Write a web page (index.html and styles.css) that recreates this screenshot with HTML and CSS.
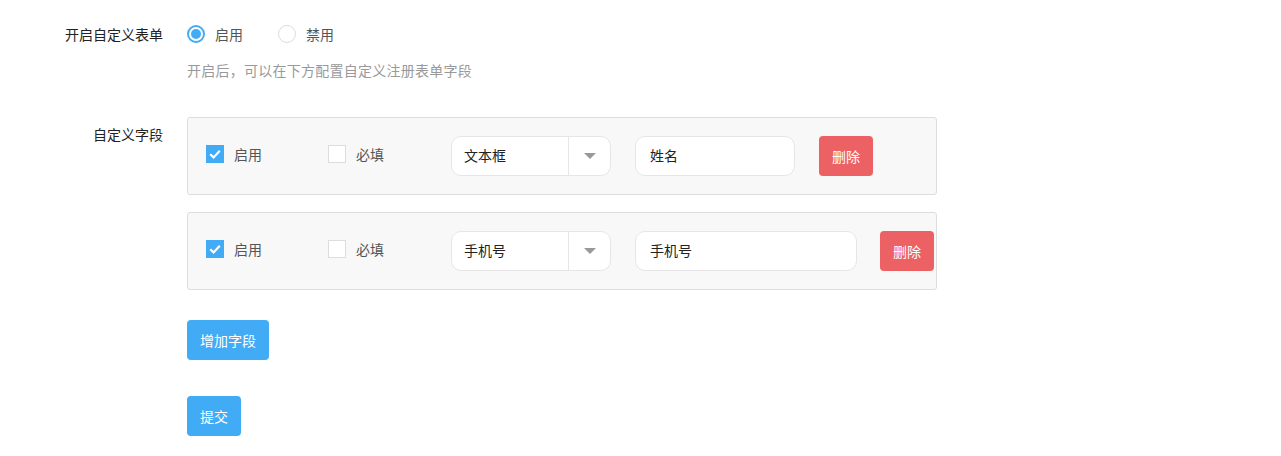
FILE: index.html
```html
<!DOCTYPE html>
<html lang="zh">
<head>
<meta charset="utf-8">
<link rel="stylesheet" href="styles.css">
</head>
<body>
<div class="form">
  <div class="form-item first">
    <div class="label">开启自定义表单</div>
    <div class="control">
      <div class="radios">
        <label class="radio"><span class="radio-dot on"></span><span>启用</span></label>
        <label class="radio"><span class="radio-dot"></span><span>禁用</span></label>
      </div>
      <div class="help">开启后，可以在下方配置自定义注册表单字段</div>
    </div>
  </div>

  <div class="form-item">
    <div class="label second">自定义字段</div>
    <div class="control">
      <div class="card">
        <label class="check"><span class="box on"><svg viewBox="0 0 18 18" width="18" height="18"><path d="M4.2 9.2 L7.6 12.4 L13.8 5.8" fill="none" stroke="#fff" stroke-width="2.2"/></svg></span><span>启用</span></label>
        <label class="check"><span class="box"></span><span>必填</span></label>
        <div class="select"><span class="select-text">文本框</span><span class="select-arrow"><i></i></span></div>
        <div class="input">姓名</div>
        <button class="btn danger">删除</button>
      </div>
      <div class="card">
        <label class="check"><span class="box on"><svg viewBox="0 0 18 18" width="18" height="18"><path d="M4.2 9.2 L7.6 12.4 L13.8 5.8" fill="none" stroke="#fff" stroke-width="2.2"/></svg></span><span>启用</span></label>
        <label class="check"><span class="box"></span><span>必填</span></label>
        <div class="select"><span class="select-text">手机号</span><span class="select-arrow"><i></i></span></div>
        <div class="input wide">手机号</div>
        <button class="btn danger">删除</button>
      </div>
      <button class="btn primary add">增加字段</button>
      <button class="btn primary submit">提交</button>
    </div>
  </div>
</div>
</body>
</html>
```

FILE: styles.css
```css
* { box-sizing: border-box; }
html, body { margin: 0; padding: 0; background: #fff; }
body {
  font-family: "Noto Sans CJK SC", "Microsoft YaHei", sans-serif;
  font-size: 14px;
  color: #333;
}
.form { padding-top: 16px; }
.form-item { display: flex; align-items: flex-start; }
.form-item.first { margin-bottom: 29px; }
.label {
  width: 163px;
  flex: none;
  text-align: right;
  line-height: 36px;
  height: 36px;
  color: #222;
  margin-right: 24px;
}
.label.second { line-height: 34px; }
.control { display: flex; flex-direction: column; align-items: flex-start; }
.radios { display: flex; align-items: center; height: 36px; }
.radio { display: flex; align-items: center; color: #555; margin-right: 35px; cursor: pointer; }
.radio-dot {
  width: 18px; height: 18px; border-radius: 50%;
  border: 1px solid #ddd; background: #fff;
  margin-right: 10px; position: relative;
}
.radio-dot.on { border: 2px solid #42abf6; }
.radio-dot.on::after {
  content: ""; position: absolute; left: 2px; top: 2px;
  width: 10px; height: 10px; border-radius: 50%; background: #42abf6;
}
.help { line-height: 36px; color: #999; letter-spacing: 0.25px; }
.card {
  width: 750px; height: 78px;
  border: 1px solid #ddd; border-radius: 3px;
  background: #f8f8f8;
  display: flex; align-items: center;
  padding: 0 18px;
  margin-bottom: 17px;
}
.check { display: flex; align-items: center; color: #555; width: 122px; flex: none; margin-top: -4px; }
.check + .check { width: 123px; }
.box {
  width: 18px; height: 18px; border: 1px solid #ddd; background: #fff;
  margin-right: 10px; display: flex;
}
.box.on { background: #42abf6; border: none; }
.box svg { display: block; }
.select {
  width: 160px; height: 40px; border: 1px solid #e6e6e6; border-radius: 10px;
  background: #fff; display: flex; align-items: stretch; margin-right: 24px; flex: none;
}
.select-text { flex: 1; padding-left: 12px; line-height: 37px; color: #222; }
.select-arrow {
  width: 42px; border-left: 1px solid #e6e6e6; display: flex; align-items: center; justify-content: center;
}
.select-arrow i {
  width: 0; height: 0;
  border-left: 6px solid transparent; border-right: 6px solid transparent; border-top: 6px solid #999;
}
.input {
  width: 160px; height: 40px; border: 1px solid #e6e6e6; border-radius: 10px;
  background: #fff; padding-left: 14px; line-height: 37px; color: #222;
  margin-right: 24px; flex: none;
}
.input.wide { width: 222px; margin-right: 23px; }
.btn {
  height: 40px; border: none; border-radius: 4px; color: #fff;
  font-family: inherit; font-size: 14px; padding: 0; cursor: pointer; flex: none;
  line-height: 38px;
}
.danger { background: #ec6264; width: 54px; }
.primary { background: #42abf6; }
.add { width: 82px; margin-top: 13px; }
.submit { width: 54px; margin-top: 36px; }
```
